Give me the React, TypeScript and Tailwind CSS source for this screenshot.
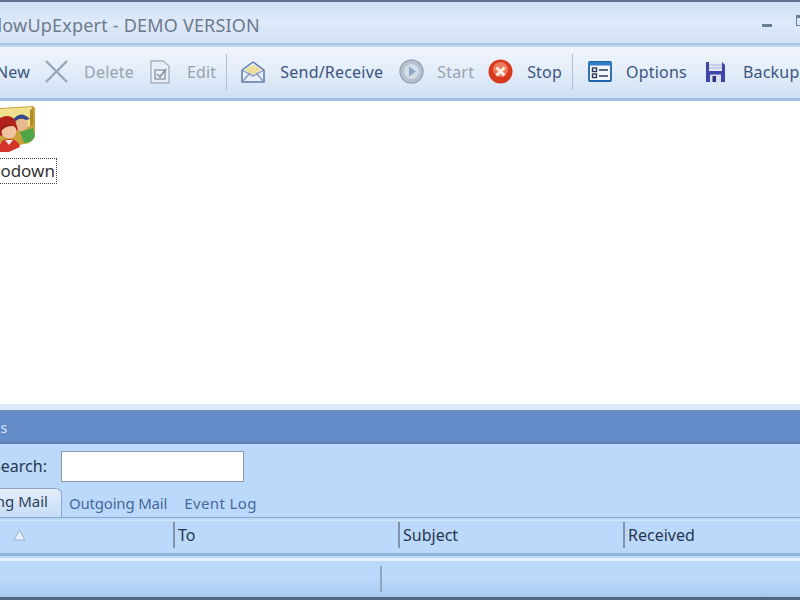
import type { ReactNode } from "react";

const font = { fontFamily: '"Noto Sans", sans-serif' };

function ToolItem({ icon, label, disabled, gap, left }: { icon?: ReactNode; label: string; disabled?: boolean; gap: string; left: string }) {
    return (
        <div className={`flex items-center shrink-0 ${left}`}>
            {icon}
            <span className={`${gap} text-[16px] tracking-[0.2px] whitespace-nowrap ${disabled ? "text-[#98a3b0]" : "text-[#3a5482]"}`}>{label}</span>
        </div>
    );
}

function Envelope() {
    return (
        <svg width="26" height="24" viewBox="0 0 26 24" className="shrink-0">
            <path d="M2 10 L13 2 L24 10 L24 22 L2 22 Z" fill="#e8effa" stroke="#5c78a8" strokeWidth="1.5" strokeLinejoin="round" />
            <path d="M5 10 Q13 1 21 10 L13 15 Z" fill="#ecdf9c" />
            <path d="M2 10 L13 16 L24 10" fill="none" stroke="#7f95bd" strokeWidth="1.2" />
            <path d="M2 22 L10 13 M24 22 L16 13" stroke="#7f95bd" strokeWidth="1.2" />
        </svg>
    );
}

function People() {
    return (
        <svg width="36" height="46" viewBox="0 0 36 46" className="block">
            <path d="M0 2 L33 0 L35 2 L35 30 Q32 38 24 38 L0 44 Z" fill="#c9a23a" />
            <path d="M0 3 L32 1 L33 20 L0 24 Z" fill="#efe08e" />
            <path d="M20 26 L33 22 L35 30 Q32 37 24 37 Z" fill="#4fa548" />
            <path d="M30 4 L33 2 L33 20 L30 20 Z" fill="#b38a2e" />
            <circle cx="21" cy="18" r="7" fill="#e8b98e" />
            <path d="M12 15 Q20 3 30 13 L26 14 Q19 10 13 18 Z" fill="#35498c" />
            <path d="M0 12 Q9 7 15 14 L18 24 L0 30 Z" fill="#b3201a" />
            <circle cx="9" cy="25" r="7.5" fill="#f0c4a0" />
            <path d="M0 22 Q9 12 18 23 L13 20 Q6 19 0 26 Z" fill="#a11d18" />
            <path d="M0 39 Q2 32 9 33 Q18 33 20 41 L9 46 L0 46 Z" fill="#d4352a" />
            <path d="M5 34 L9 39 L13 34 Z" fill="#f4ece0" />
        </svg>
    );
}

export default function App() {
    return (
        <div className="w-[800px] h-[600px] overflow-hidden flex flex-col bg-[#bcd9fb]" style={font}>
            {/* title bar */}
            <div className="h-[45px] shrink-0 pt-[5px] border-t-[2px] border-t-[#5d7190] border-b-[2px] border-b-[#a9c2de] bg-gradient-to-b from-[#cfe0f4] via-[#dfeafa] to-[#d3e2f5] flex items-center">
                <span className="ml-[-28px] text-[18px] tracking-[0.2px] text-[#6c7a8c] whitespace-nowrap">FollowUpExpert - DEMO VERSION</span>
                <div className="ml-auto flex items-center gap-[24px] mr-[-8px]">
                    <div className="w-[10px] h-[3px] mt-[1px] bg-[#6d7f96]" />
                    <div className="w-[12px] h-[11px] mt-[-10px] border border-[#6d7f96] border-t-[3px]" />
                </div>
            </div>
            {/* toolbar */}
            <div className="h-[54px] shrink-0 mt-[2px] pb-[2px] bg-gradient-to-b from-[#f0f5fc] via-[#e3edf9] to-[#cfe0f4] border-b-[3px] border-b-[#9cbfe2] flex items-center">
                <ToolItem label="New" gap="ml-0" left="ml-[-4px]" />
                <ToolItem
                    disabled
                    label="Delete"
                    gap="ml-[15px]"
                    left="ml-[14px]"
                    icon={
                        <svg width="25" height="25" viewBox="0 0 25 25" className="shrink-0">
                            <path d="M2 2 L23 23 M23 2 L2 23" stroke="#98a6b5" strokeWidth="2.4" />
                        </svg>
                    }
                />
                <ToolItem
                    disabled
                    label="Edit"
                    gap="ml-[17px]"
                    left="ml-[16px]"
                    icon={
                        <svg width="20" height="24" viewBox="0 0 20 24" className="shrink-0">
                            <path d="M1 1 L13 1 L19 6 L19 23 L1 23 Z" fill="#e9eff7" stroke="#a7b3c1" strokeWidth="1.4" />
                            <rect x="5" y="10" width="10" height="9" fill="none" stroke="#8d9aa9" strokeWidth="1.4" />
                            <path d="M7 14 L10 17 L16 9" fill="none" stroke="#7c8999" strokeWidth="1.4" />
                        </svg>
                    }
                />
                <div className="w-[1px] h-[36px] bg-[#b0c1d4] ml-[10px] shrink-0" />
                <ToolItem label="Send/Receive" gap="ml-[14px]" left="ml-[13px]" icon={<Envelope />} />
                <ToolItem
                    disabled
                    label="Start"
                    gap="ml-[13px]"
                    left="ml-[16px]"
                    icon={
                        <svg width="25" height="25" viewBox="0 0 25 25" className="shrink-0">
                            <circle cx="12.5" cy="12.5" r="11.5" fill="#b6c2d0" stroke="#97a5b5" strokeWidth="1.4" />
                            <circle cx="12.5" cy="12.5" r="7.5" fill="#d4dee9" />
                            <path d="M10 7.5 L17 12.5 L10 17.5 Z" fill="#8fa8c8" />
                        </svg>
                    }
                />
                <ToolItem
                    label="Stop"
                    gap="ml-[14px]"
                    left="ml-[14px]"
                    icon={
                        <svg width="25" height="25" viewBox="0 0 25 25" className="shrink-0">
                            <circle cx="12.5" cy="12.5" r="12" fill="#d8391c" />
                            <circle cx="12.5" cy="10.5" r="7.5" fill="#ed7a5c" />
                            <path d="M8.5 8.5 L16.5 16.5 M16.5 8.5 L8.5 16.5" stroke="#fdeee4" strokeWidth="3" />
                        </svg>
                    }
                />
                <div className="w-[1px] h-[36px] bg-[#b0c1d4] ml-[10px] shrink-0" />
                <ToolItem
                    label="Options"
                    gap="ml-[14px]"
                    left="ml-[15px]"
                    icon={
                        <svg width="24" height="21" viewBox="0 0 24 21" className="shrink-0">
                            <rect x="1" y="1" width="22" height="19" rx="1" fill="#f2f7fd" stroke="#1f64a8" strokeWidth="1.8" />
                            <rect x="1" y="1" width="22" height="3.5" fill="#2d7cc4" />
                            <rect x="4.5" y="7" width="4" height="3.5" fill="none" stroke="#2a3a55" strokeWidth="1.4" />
                            <rect x="4.5" y="13" width="4" height="3.5" fill="none" stroke="#2a3a55" strokeWidth="1.4" />
                            <path d="M11 9 H20 M11 15 H20" stroke="#2a3a55" strokeWidth="1.5" />
                        </svg>
                    }
                />
                <ToolItem
                    label="Backup"
                    gap="ml-[17px]"
                    left="ml-[18px]"
                    icon={
                        <svg width="21" height="22" viewBox="0 0 21 22" className="shrink-0">
                            <path d="M1 1 H17 L20 4 V21 H1 Z" fill="#3d46a6" />
                            <rect x="4" y="1" width="13" height="9" fill="#e6e9f6" />
                            <path d="M4 4 H17 M4 7 H17" stroke="#a9b2d8" strokeWidth="1" />
                            <rect x="5" y="13.5" width="11" height="7.5" fill="#d7dcef" />
                            <rect x="7.5" y="15" width="3.5" height="6" fill="#2c3383" />
                        </svg>
                    }
                />
            </div>
            {/* desktop area */}
            <div className="h-[303px] shrink-0 bg-white flex flex-col items-start overflow-hidden">
                <div className="mt-[5px]">
                    <People />
                </div>
                <div className="mt-[6px] ml-[-14px] h-[26px] pl-[1px] pr-[1px] flex items-center border border-dotted border-[#444] text-[17px] text-[#333] whitespace-nowrap">
                    Godown
                </div>
            </div>
            {/* log panel */}
            <div className="h-[6px] shrink-0 bg-[#dce9f8]" />
            <div className="h-[34px] shrink-0 bg-[#628bc8] border-t-[2px] border-t-[#6f8db8] border-b-[2px] border-b-[#5a7fb5] flex items-center">
                <span className="ml-[-24px] text-[14px] text-[#dbe7f6]">Logs</span>
            </div>
            <div className="h-[44px] shrink-0 flex items-center">
                <span className="ml-[-8px] text-[16px] text-[#26384f] whitespace-nowrap">Search:</span>
                <input className="ml-[14px] w-[183px] h-[31px] bg-white border-[1.5px] border-[#8a9bb0]" />
            </div>
            <div className="h-[30px] shrink-0 flex items-end border-b border-b-[#8ba6c8]">
                <div className="ml-[-46px] h-[29px] w-[108px] pb-[3px] bg-gradient-to-b from-[#e4eefb] to-[#c6ddf7] border border-[#8ba6c8] border-b-0 rounded-t-[6px] flex items-center justify-end pr-[13px] text-[15px] text-[#2c3e58] whitespace-nowrap">
                    Incoming Mail
                </div>
                <span className="ml-[7px] mb-[3px] text-[15px] tracking-[-0.2px] text-[#47689a] whitespace-nowrap">Outgoing Mail</span>
                <span className="ml-[17px] mb-[3px] text-[15px] tracking-[0.4px] text-[#47689a] whitespace-nowrap">Event Log</span>
            </div>
            <div className="h-[36px] shrink-0 mt-[2px] pb-[4px] border-t border-t-[#d3e4f9] border-b-[3px] border-b-[#8fb2d6] flex items-center text-[16px] text-[#25364e]">
                <div className="w-[175px] h-[26px] shrink-0 border-r-[2px] border-r-[#7f93ad] flex items-center pl-[13px]">
                    <svg width="13" height="12" viewBox="0 0 13 12">
                        <path d="M6.5 1 L12 11 L1 11 Z" fill="#e8f0fb" stroke="#9fb0c6" strokeWidth="1" />
                    </svg>
                </div>
                <div className="w-[225px] h-[26px] shrink-0 border-r-[2px] border-r-[#7f93ad] flex items-center pl-[3px]">To</div>
                <div className="w-[225px] h-[26px] shrink-0 border-r-[2px] border-r-[#7f93ad] flex items-center pl-[3px]">Subject</div>
                <div className="h-[26px] flex items-center pl-[3px]">Received</div>
            </div>
            <div className="h-[3px] shrink-0 mt-[2px] bg-[#e6f0fc]" />
            {/* status bar */}
            <div className="flex-1 flex items-center border-b-[3px] border-b-[#4f6785] bg-gradient-to-b from-[#bcd9fb] via-[#bcd9fb] to-[#a9c9ec]">
                <div className="w-[382px] h-[26px] border-r-[2px] border-r-[#8ea6c2]" />
            </div>
        </div>
    );
}
